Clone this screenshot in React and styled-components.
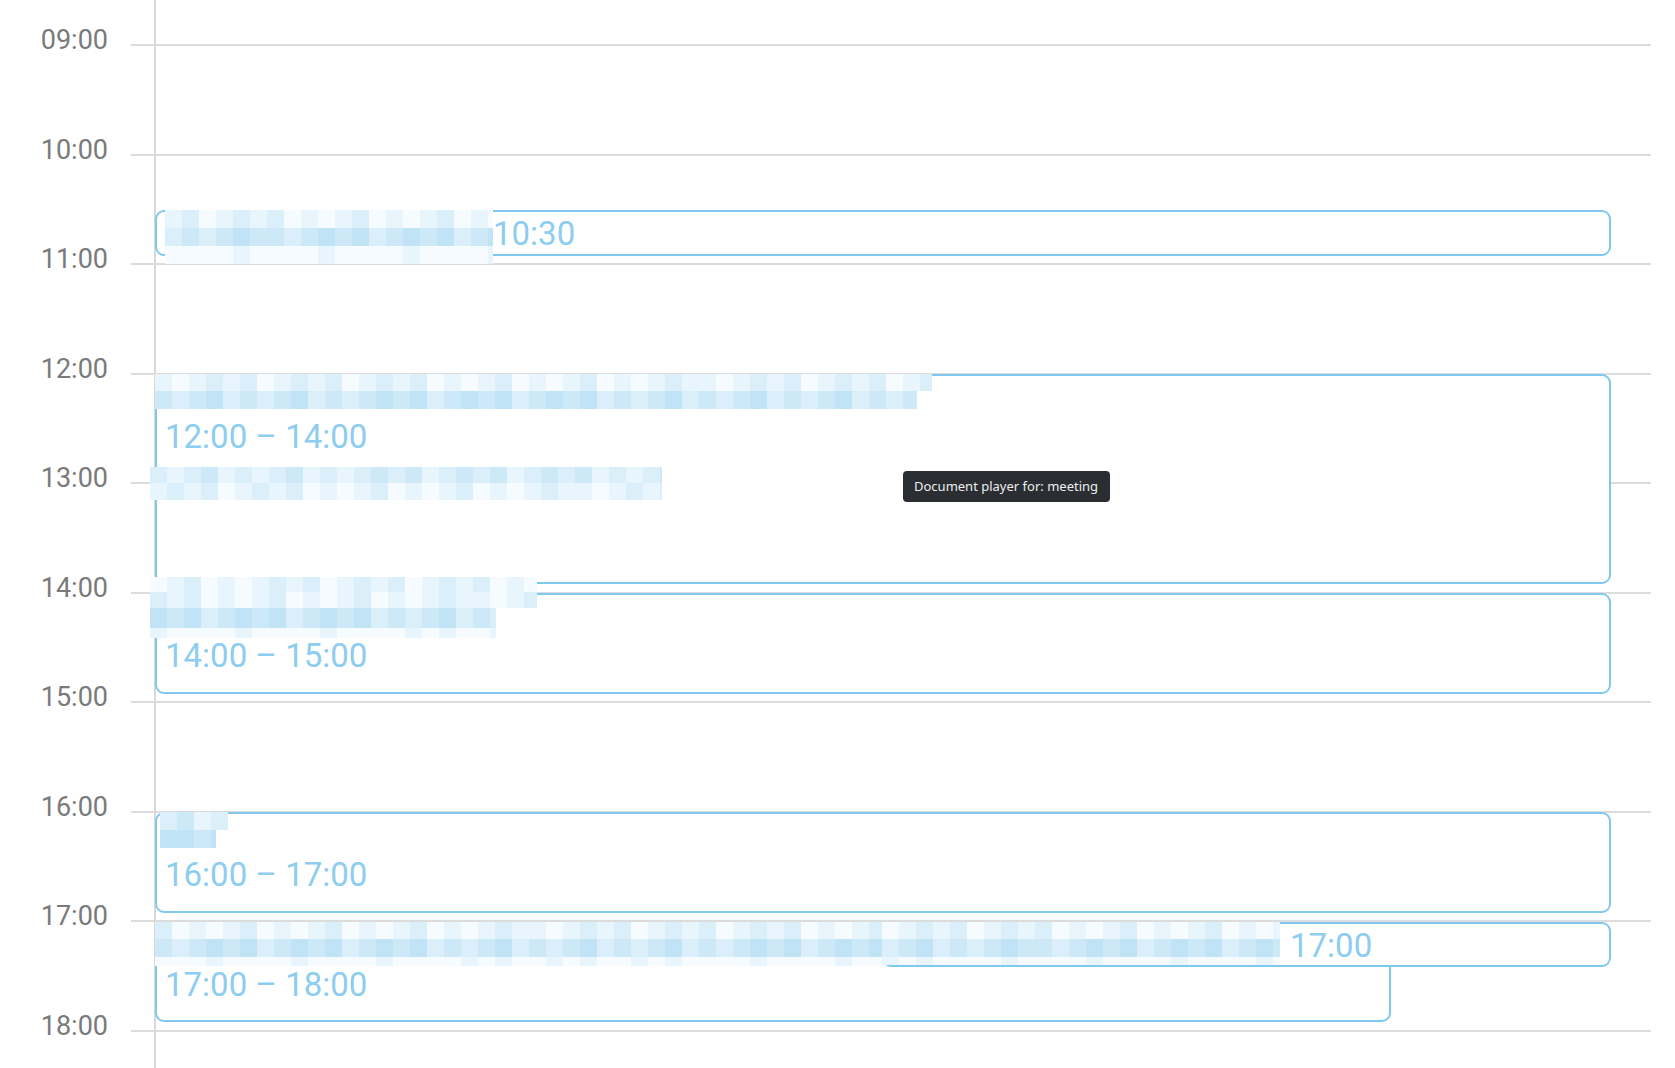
import React from "react";
import styled, { createGlobalStyle } from "styled-components";

const HOUR = 109.5;
const FIRST_LINE = 45;
const CELL = 17;

const GlobalStyle = createGlobalStyle`
  html, body {
    margin: 0;
    padding: 0;
    background: #ffffff;
  }
  body {
    font-family: Roboto, "Liberation Sans", sans-serif;
  }
`;

const Page = styled.div`
  position: relative;
  width: 100vw;
  height: 100vh;
  overflow: hidden;
  background: #ffffff;
`;

const Grid = styled.div`
  padding-top: 44px;
`;

const HourRow = styled.div`
  display: flex;
  align-items: flex-start;
  height: ${HOUR}px;
`;

const HourLabel = styled.div`
  box-sizing: border-box;
  width: 131px;
  padding-right: 23px;
  margin-top: -17px;
  text-align: right;
  font-size: 27px;
  line-height: 27px;
  color: #7a7a7a;
`;

const HourLine = styled.div`
  flex: 1;
  margin-right: 24px;
  border-top: 2px solid #dcdcdc;
`;

const EventLayer = styled.div`
  position: absolute;
  top: 0;
  bottom: 0;
  left: 155px;
  width: 1456px;

  &::before {
    content: "";
    position: absolute;
    top: 0;
    bottom: 0;
    left: -1px;
    width: 2px;
    background: #d9d9d9;
  }
`;

const EventBox = styled.div`
  position: absolute;
  box-sizing: border-box;
  border: 2px solid #7fc9ef;
  border-radius: 9px;
  background: #ffffff;
  padding: 0 8px;
  display: flex;
  flex-direction: ${(p) => (p.$inline ? "row" : "column")};
  align-items: flex-start;
`;

const TitleSlot = styled.div`
  height: 39px;
`;

const TimeText = styled.div`
  font-size: 33px;
  line-height: 44px;
  color: #8ccdf0;
  white-space: nowrap;
  margin-left: ${(p) => p.$gap || 0}px;
`;

const MosaicBox = styled.div`
  display: flex;
  flex-direction: column;
  margin-left: ${(p) => p.$dx}px;
  margin-top: ${(p) => p.$dy}px;
  flex-shrink: 0;
  filter: blur(0.6px);
`;

const MosaicRow = styled.div`
  display: flex;
  overflow: hidden;
  height: ${(p) => p.$h}px;
`;

const Cell = styled.div`
  flex-shrink: 0;
  width: ${CELL}px;
  height: 100%;
`;

const Tooltip = styled.div`
  position: absolute;
  left: 903px;
  top: 471px;
  height: 31px;
  padding: 0 12px 0 11px;
  border-radius: 4px;
  background: #2a2d32;
  color: #eceef0;
  font-family: "Noto Sans", "Open Sans", sans-serif;
  font-size: 13px;
  line-height: 31px;
  white-space: nowrap;
`;

const SHADES = ["#f5fbfe", "#e8f5fc", "#dbeffa", "#cde9f8", "#c0e3f6"];

function shadeFor(tone, i, r, seed) {
  const n = (i * 7919 + r * 104729 + seed * 3571) % 101;
  const jitter = n < 30 ? -1 : n > 72 ? 1 : 0;
  const t = Math.max(0, Math.min(4, tone + jitter));
  return SHADES[t];
}

function Mosaic({ spec, seed }) {
  return (
    <MosaicBox $dx={spec.dx} $dy={spec.dy}>
      {spec.rows.map((row, r) => {
        const count = Math.ceil(row.width / CELL);
        return (
          <MosaicRow key={r} $h={row.h || CELL} style={{ width: row.width }}>
            {Array.from({ length: count }, (_, i) => (
              <Cell key={i} style={{ background: shadeFor(row.tone, i, r, seed) }} />
            ))}
          </MosaicRow>
        );
      })}
    </MosaicBox>
  );
}

const hours = ["09:00", "10:00", "11:00", "12:00", "13:00", "14:00", "15:00", "16:00", "17:00", "18:00"];

const events = [
  {
    id: 1,
    start: 10.5,
    dur: 0.5,
    left: 0,
    width: 1456,
    inline: true,
    time: "10:30",
    title: { dx: 0, dy: -2, rows: [{ tone: 1, width: 328, h: 18 }, { tone: 3, width: 328, h: 18 }, { tone: 0, width: 328, h: 18 }] },
  },
  {
    id: 2,
    start: 12,
    dur: 2,
    left: 0,
    width: 1456,
    time: "12:00 – 14:00",
    title: { dx: -10, dy: -2, rows: [{ tone: 1, width: 777, h: 17 }, { tone: 3, width: 762, h: 18 }] },
    desc: { dx: -15, dy: 8, rows: [{ tone: 2, width: 512, h: 16 }, { tone: 1, width: 512, h: 17 }] },
  },
  {
    id: 3,
    start: 14,
    dur: 1,
    left: 0,
    width: 1456,
    time: "14:00 – 15:00",
    title: { dx: -15, dy: -18, rows: [{ tone: 1, width: 387, h: 15 }, { tone: 1, width: 387, h: 16 }, { tone: 3, width: 346, h: 20 }, { tone: 0, width: 346, h: 10 }] },
  },
  {
    id: 4,
    start: 16,
    dur: 1,
    left: 0,
    width: 1456,
    time: "16:00 – 17:00",
    title: { dx: -5, dy: -2, rows: [{ tone: 2, width: 68, h: 18 }, { tone: 4, width: 56, h: 18 }] },
  },
  {
    id: 5,
    start: 17,
    dur: 1,
    left: 0,
    width: 1236,
    time: "17:00 – 18:00",
    title: { dx: -10, dy: -2, rows: [{ tone: 1, width: 740, h: 17 }, { tone: 3, width: 740, h: 18 }, { tone: 0, width: 740, h: 9 }] },
  },
  {
    id: 6,
    start: 17,
    dur: 0.5,
    left: 727,
    width: 729,
    inline: true,
    time: "17:00",
    gap: 10,
    title: { dx: -10, dy: -2, rows: [{ tone: 1, width: 398, h: 17 }, { tone: 3, width: 398, h: 18 }, { tone: 0, width: 398, h: 8 }] },
  },
];

function CalendarEvent({ ev }) {
  const pos = {
    top: FIRST_LINE + (ev.start - 9) * HOUR + 0.5,
    height: ev.dur * HOUR - 9,
    left: ev.left,
    width: ev.width,
  };

  if (ev.inline) {
    return (
      <EventBox $inline style={pos}>
        <Mosaic spec={ev.title} seed={ev.id} />
        <TimeText $gap={ev.gap}>{ev.time}</TimeText>
      </EventBox>
    );
  }

  return (
    <EventBox style={pos}>
      <TitleSlot>
        <Mosaic spec={ev.title} seed={ev.id} />
      </TitleSlot>
      <TimeText>{ev.time}</TimeText>
      {ev.desc && <Mosaic spec={ev.desc} seed={ev.id + 11} />}
    </EventBox>
  );
}

export default function App() {
  return (
    <Page>
      <GlobalStyle />
      <Grid>
        {hours.map((h) => (
          <HourRow key={h}>
            <HourLabel>{h}</HourLabel>
            <HourLine />
          </HourRow>
        ))}
      </Grid>
      <EventLayer>
        {events.map((ev) => (
          <CalendarEvent key={ev.id} ev={ev} />
        ))}
      </EventLayer>
      <Tooltip>Document player for: meeting</Tooltip>
    </Page>
  );
}
